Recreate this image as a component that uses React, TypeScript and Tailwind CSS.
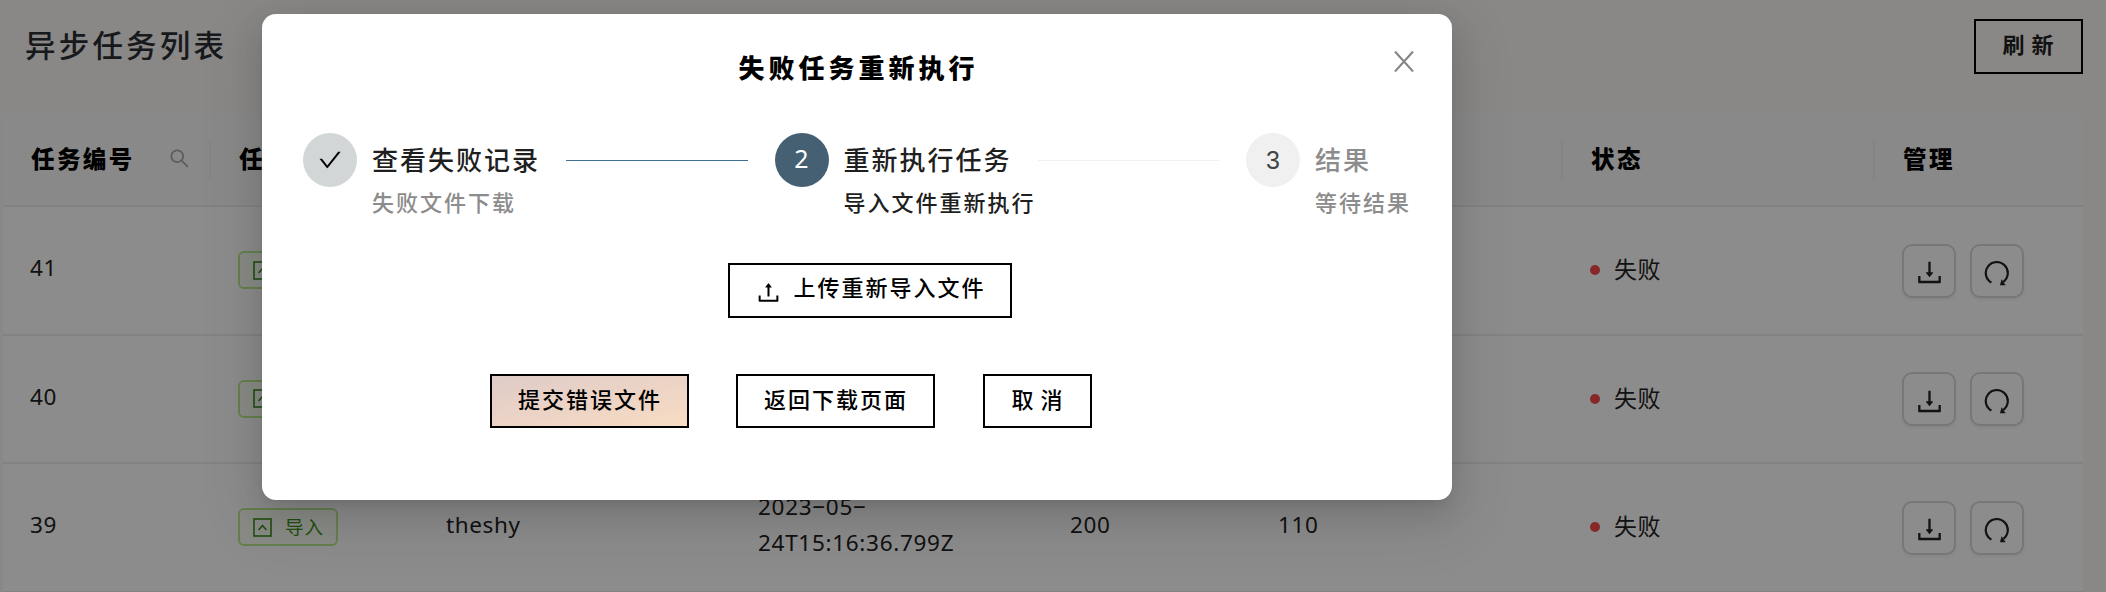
import { ReactNode } from 'react';
import { AiOutlineCheck, AiOutlineDownload, AiOutlineSearch, AiOutlineUpload } from 'react-icons/ai';

const columns = 'grid grid-cols-[208px_208px_312px_312px_208px_312px_312px_208px]';

function ImportTag() {
  return (
    <span className="flex h-[38px] w-[100px] items-center rounded-md border-2 border-[#b7eb8f] bg-[#f6ffed]/60 pl-[13px] text-[18.5px] tracking-[1px] text-[#3d8f1a]">
      <svg className="mr-[13px] size-[19px]" viewBox="0 0 19 19" fill="none" stroke="currentColor" strokeWidth="1.6">
        <rect x="1" y="1" width="17" height="17" />
        <path d="M5.6 12 9.5 7.4 13.4 12" />
      </svg>
      <span className="pb-px">导入</span>
    </span>
  );
}

function RedoIcon() {
  return (
    <svg className="size-[26px]" viewBox="0 0 26 26" fill="none">
      <path d="M7.4 22.6A11 11 0 1 1 19.4 21.8" stroke="currentColor" strokeWidth="2.2" />
      <path d="M17.6 19.2 16 25.2 21.6 25.2Z" fill="currentColor" />
    </svg>
  );
}

function IconButton({ children }: { children: ReactNode }) {
  return (
    <button className="flex h-[54px] w-[54px] items-center justify-center rounded-[10px] border-2 border-[#d9d9d9] bg-white pt-1 text-[31px] text-[#222] shadow-[0_2px_3px_rgba(0,0,0,0.05)]">
      {children}
    </button>
  );
}

type Task = { id: string; user?: string; time?: [string, string]; total?: string; failed?: string };

function Row({ id, user, time, total, failed }: Task) {
  return (
    <div className={columns + ' h-[128.5px] items-center border-b-2 border-[#ededed] text-[22.5px] text-[#222]'}>
      <div className="pb-1 pl-[27px] font-['Noto_Sans'] tracking-[0.6px]">{id}</div>
      <div className="pl-[27px]"><ImportTag /></div>
      <div className="pb-1 pl-[27px] font-['Noto_Sans'] tracking-[0.6px]">{user}</div>
      <div className="pb-1 pl-[27px] font-['Noto_Sans'] leading-[36px] tracking-[0.7px]">
        {time && <>{time[0]}<br />{time[1]}</>}
      </div>
      <div className="pb-1 pl-[27px] font-['Noto_Sans'] tracking-[0.6px]">{total}</div>
      <div className="pb-1 pl-[27px] font-['Noto_Sans'] tracking-[0.6px]">{failed}</div>
      <div className="flex items-center pl-[27px] text-[23px] tracking-[0.5px]">
        <span className="mr-[14px] size-[10px] rounded-full bg-[#f5484a]" />
        <span className="pb-1">失败</span>
      </div>
      <div className="flex gap-[14px] pt-px pl-[27px]">
        <IconButton><AiOutlineDownload /></IconButton>
        <IconButton><RedoIcon /></IconButton>
      </div>
    </div>
  );
}

function Head({ children, bar = true }: { children?: ReactNode; bar?: boolean }) {
  return (
    <div className="flex items-center">
      <div className="flex flex-1 items-center pb-0.5 pl-[28px] pr-[18px]">{children}</div>
      {bar && <span className="h-10 w-0.5 bg-[#f0f0f0]" />}
    </div>
  );
}

function Step({ icon, circle, title, titleColor, desc, descColor, line }: {
  icon: ReactNode; circle: string; title: string; titleColor: string; desc: string; descColor: string; line?: string;
}) {
  return (
    <div className={line ? 'flex flex-1' : 'flex'}>
      <div className={'mr-[15px] flex size-[54px] shrink-0 items-center justify-center rounded-full text-[25px] ' + circle}>{icon}</div>
      <div className="min-w-0 flex-1">
        <div className="flex h-[54px] items-center">
          <span className={'pb-1 text-[26px] leading-[39px] font-medium whitespace-nowrap tracking-[2px] ' + titleColor}>{title}</span>
          {line && <span className={'mt-px ml-[26px] mr-[27px] h-px flex-1 ' + line} />}
        </div>
        <div className={'-mt-0.5 text-[22px] leading-[32px] font-medium whitespace-nowrap tracking-[2px] ' + descColor}>{desc}</div>
      </div>
    </div>
  );
}

export default function App() {
  return (
    <div className="relative h-[592px] w-[2106px] overflow-hidden bg-[#f9f7f4] font-['Noto_Sans_CJK_SC',sans-serif]">
      <div className="flex h-[114px] justify-between pl-[25px] pr-[23px]">
        <h1 className="pt-[20px] text-[30.5px] leading-[48px] font-medium tracking-[3.2px] text-[#2b2e33]">异步任务列表</h1>
        <button className="mt-[19px] h-[55px] w-[109px] border-2 border-black pb-1.5 text-[22px] font-bold tracking-[1px] text-[#222]">刷 新</button>
      </div>
      <div className="ml-[3px] h-[478px] w-[2080px] bg-white">
        <div className={columns + ' h-[93px] border-b-2 border-[#ededed] bg-[#fafafa] text-[23.5px] font-black tracking-[2.4px] text-black'}>
          <Head>
            <span>任务编号</span>
            <AiOutlineSearch className="ml-auto text-[23px] text-[#a6a6a6]" />
          </Head>
          <Head>任务</Head>
          <Head />
          <Head />
          <Head />
          <Head />
          <Head>状态</Head>
          <Head bar={false}>管理</Head>
        </div>
        <Row id="41" />
        <Row id="40" />
        <Row id="39" user="theshy" time={['2023−05−', '24T15:16:36.799Z']} total="200" failed="110" />
      </div>

      <div className="absolute inset-0 bg-black/45" />

      <div className="absolute top-[14px] left-[262px] flex h-[486px] w-[1190px] flex-col rounded-[14px] bg-white px-[41px] shadow-[0_12px_32px_rgba(0,0,0,0.12),0_6px_12px_-8px_rgba(0,0,0,0.16),0_18px_56px_16px_rgba(0,0,0,0.07)]">
        <svg className="absolute top-[37px] right-[38px] h-[21px] w-[20px]" viewBox="0 0 20 21" fill="none" stroke="#858585" strokeWidth="2.2">
          <path d="M1 0.6 19 20.4M19 0.6 1 20.4" />
        </svg>
        <h2 className="pt-[34px] pl-[3px] text-center text-[26px] leading-[37px] font-black tracking-[4px] text-black">失败任务重新执行</h2>
        <div className="mt-[48px] flex">
          <Step icon={<AiOutlineCheck className="text-[26px] text-black" />} circle="bg-[#d3d6d6]" title="查看失败记录" titleColor="text-[#1f1f1f]" desc="失败文件下载" descColor="text-[#8c8c8c]" line="bg-[#3f7094]" />
          <Step icon={<span className="pb-0.5 font-['Noto_Sans']">2</span>} circle="bg-[#456073] text-white" title="重新执行任务" titleColor="text-[#1f1f1f]" desc="导入文件重新执行" descColor="text-[#1f1f1f]" line="bg-[#f0f0f0]" />
          <Step icon={<span className="pt-0.5 font-['Liberation_Sans']">3</span>} circle="bg-[#f0f0f0] text-[#444]" title="结果" titleColor="text-[#8c8c8c]" desc="等待结果" descColor="text-[#8c8c8c]" />
        </div>
        <div className="mt-[46px] flex justify-center pl-[25px]">
          <button className="flex h-[55px] w-[284px] items-center border-2 border-black pl-[25px] text-[22px] font-medium tracking-[2px] text-black">
            <AiOutlineUpload className="mt-1 mr-[12px] text-[27px]" />
            <span className="pb-2">上传重新导入文件</span>
          </button>
        </div>
        <div className="mt-[56px] flex gap-[47px] pl-[187px] text-[22px] font-medium tracking-[2px] text-black">
          <button className="h-[54px] w-[199px] border-2 border-black bg-linear-to-br from-[#dfcbc8] to-[#f8dcc3] pb-1.5 pl-px">提交错误文件</button>
          <button className="h-[54px] w-[199px] border-2 border-black pb-1.5 pl-px">返回下载页面</button>
          <button className="ml-px h-[54px] w-[109px] border-2 border-black pb-1.5 tracking-[1px]">取 消</button>
        </div>
      </div>
    </div>
  );
}
